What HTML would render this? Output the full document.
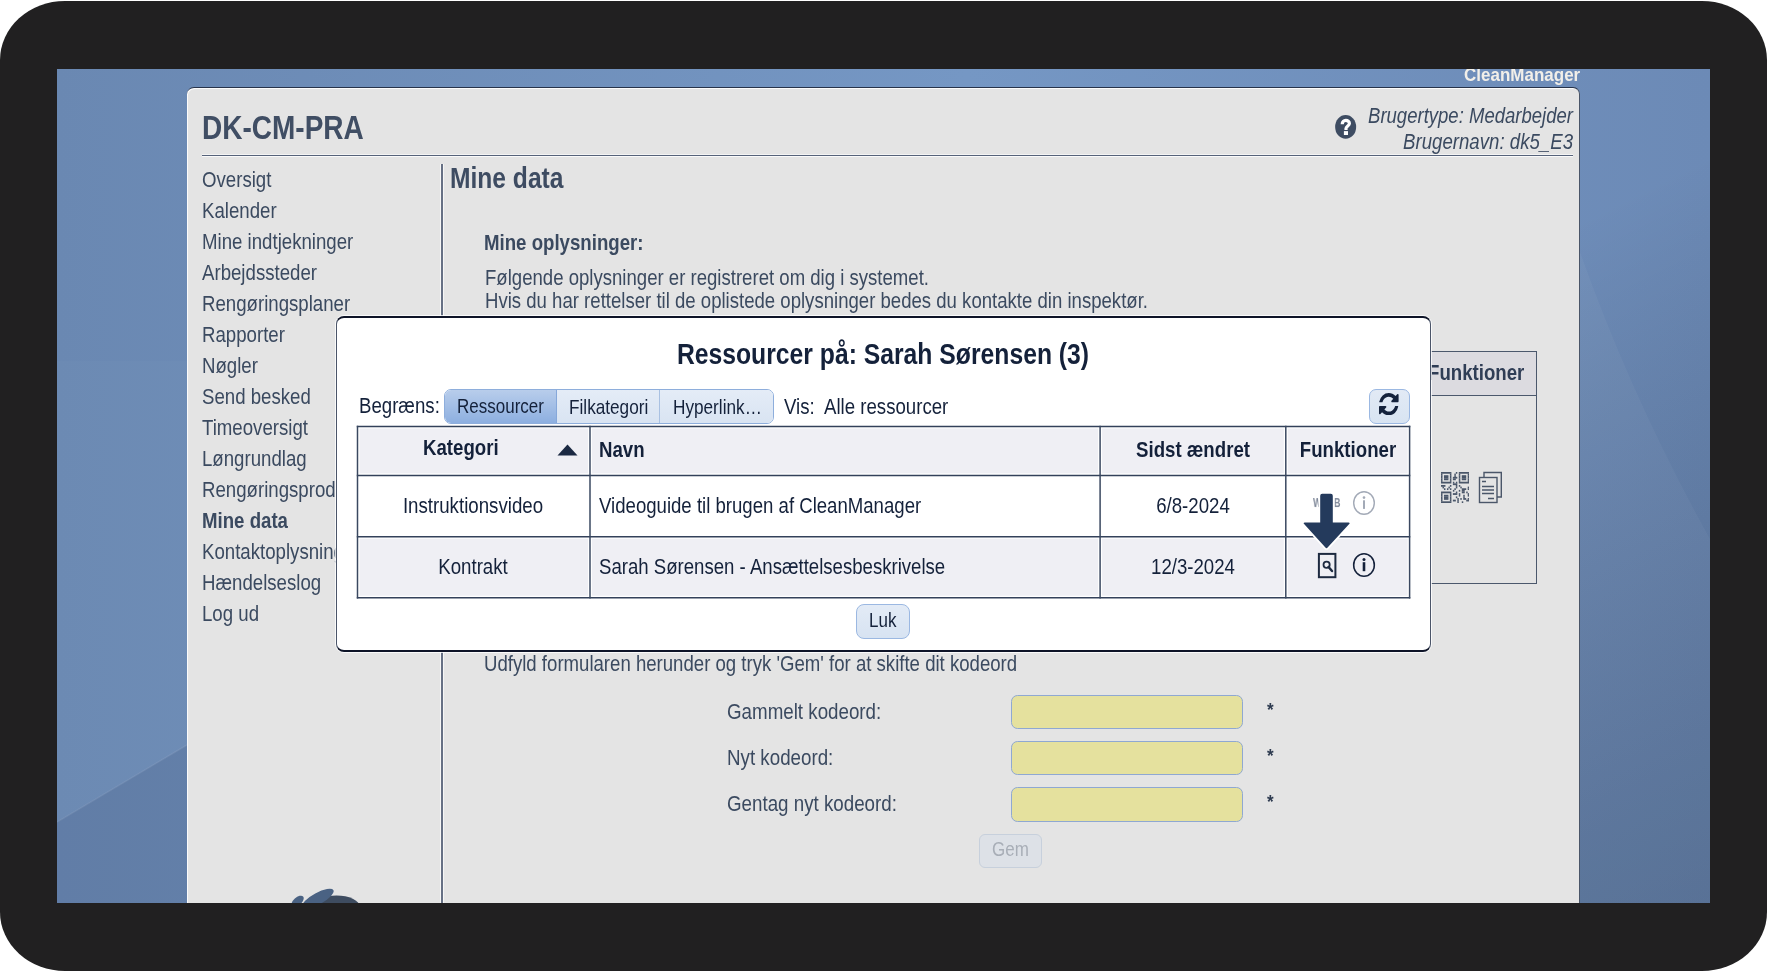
<!DOCTYPE html>
<html><head><meta charset="utf-8"><title>CleanManager</title><style>
*{margin:0;padding:0;box-sizing:border-box}
html,body{width:1767px;height:971px;overflow:hidden;background:#fff}
body{position:relative;font-family:"Liberation Sans",sans-serif}
.t{position:absolute;white-space:nowrap;will-change:transform}
.abs{position:absolute}
#frame{position:absolute;left:0;top:1px;width:1767px;height:970px;background:#212021;border-radius:65px/59px}
#screen{position:absolute;left:57px;top:69px;width:1653px;height:834px;display:block}
.streak{position:absolute}
#panel{position:absolute;left:187px;top:86.5px;width:1393px;height:816.5px;background:#e4e4e4;border-radius:7px 7px 0 0;
 border-top:1.9px solid #27334a;border-right:1.2px solid #4a5568;box-shadow:inset 1px 1px 0 #fbfbfb}
.hline{position:absolute;height:1.5px;background:#56637a;box-shadow:0 1px 0 #fafafa,0 -1px 0 #f4f4f4}
.vline{position:absolute;width:1.6px;background:#667084;box-shadow:1px 0 0 #f6f6f6,-1px 0 0 #f6f6f6}
#bgtable{position:absolute;left:480px;top:351px;width:1057px;height:233px;border:1.5px solid #4b586c;background:#e4e4e4}
.bghead{position:absolute;left:0;top:0;right:0;height:44px;background:#dcdbe0;border-bottom:1.5px solid #4b586c}
.inp{position:absolute;left:1010.8px;width:232px;height:34.3px;background:#e5e19e;border:1.2px solid #8fa8d2;border-radius:6.5px}
#gem{position:absolute;left:979px;top:834px;width:63px;height:34px;background:#dde1e7;border:1px solid #c7d0dc;border-radius:6px;color:#a8aeb7;font-size:17px;line-height:32px;text-align:center}
#modal{position:absolute;left:336px;top:315.5px;width:1095px;height:336px;background:#fff;border-radius:8px;
 border-top:2px solid #0e1428;border-bottom:2px solid #0e1428;border-left:1.3px solid #4b5569;border-right:1.3px solid #4b5569;box-shadow:0 0 0 1px rgba(255,255,255,0.8)}
#seg{position:absolute;left:444px;top:389px;height:34.5px;display:flex;border:1px solid #8eaedc;border-radius:7px;overflow:hidden}
.sg{height:100%;font-size:17px;line-height:32px;text-align:center;color:#14213a;background:linear-gradient(#e4ecf7,#d9e4f2);border-right:1px solid #a9c1e2}
.sg.last{border-right:none}
.sg.act{background:linear-gradient(#b8cdeb,#8dafe0);border-right:1px solid #86a8da}
#refresh{position:absolute;left:1368.5px;top:389px;width:41.5px;height:34.5px;border:1.5px solid #9bb8e2;border-radius:7px;background:linear-gradient(#e2eaf5,#d8e4f2)}
#tbl{position:absolute;left:357px;top:426px;width:1053px;height:173px;border:1.5px solid #313f56;border-top-width:1.4px;border-bottom-width:2px;overflow:hidden}
#tbl .row{position:absolute;left:0;right:0}
#tbl .hdr{background:#eeeef3}
#tbl .alt{background:#efeff4}
#tbl .hl{position:absolute;left:0;right:0;height:1.5px;background:#34435a}
#tbl .vl{position:absolute;top:0;bottom:0;width:1.5px;background:#34435a}
#luk{position:absolute;left:855.5px;top:604px;width:54px;height:34.5px;border:1.5px solid #9bb8e2;border-radius:8px;background:linear-gradient(#e3ebf6,#d7e3f2);color:#14213a;font-size:17px;line-height:31px;text-align:center}
</style></head>
<body>
<div id="frame"></div>
<svg id="screen" width="1653" height="834" viewBox="0 0 1653 834">
<defs>
<linearGradient id="gh" x1="0" y1="0" x2="1" y2="0"><stop offset="0" stop-color="#6a88b2"/><stop offset="0.55" stop-color="#7597c4"/><stop offset="1" stop-color="#6c8ab6"/></linearGradient>
<linearGradient id="gv" x1="0" y1="0" x2="1" y2="1"><stop offset="0" stop-color="#000" stop-opacity="0"/><stop offset="0.55" stop-color="#000" stop-opacity="0"/><stop offset="1" stop-color="#0a1830" stop-opacity="0.26"/></linearGradient>
</defs>
<rect width="1653" height="834" fill="url(#gh)"/>
<rect width="1653" height="834" fill="url(#gv)"/>
<path d="M0 292 L130 292 L130 676 L0 753 Z" fill="#fff" fill-opacity="0.02"/>
<path d="M0 753 L130 676 L130 834 L0 834 Z" fill="#0a1a38" fill-opacity="0.09"/>
<path d="M0 753 L130 676" stroke="#fff" stroke-opacity="0.08" stroke-width="1.5"/>
<path d="M1522 180 Q1575 330 1653 470 L1653 834 L1522 834 Z" fill="#fff" fill-opacity="0.035"/>
</svg>
<div style="position:absolute;left:1400px;top:69px;width:200px;height:18px;overflow:hidden">
<div class="t " style="left:64px;top:-3.09px;font-size:17px;line-height:20.4px;color:#f2efe9;transform:scaleY(1.08);transform-origin:0 16.09px;font-weight:700;">CleanManager</div>
</div>
<div id="panel"></div>
<div class="t " style="left:202px;top:112.99px;font-size:28.0px;line-height:33.6px;color:#404e64;transform:scaleY(1.19);transform-origin:0 26.51px;font-weight:700;">DK-CM-PRA</div>
<div class="hline" style="left:202px;top:154.5px;width:1371px;"></div>
<div class="t " style="left:1173.00px;width:400px;text-align:right;top:106.44px;font-size:18.55px;line-height:22.26px;color:#3b4a60;transform:scaleY(1.16);transform-origin:0 17.56px;font-style:italic;">Brugertype: Medarbejder</div>
<div class="t " style="left:1173.00px;width:400px;text-align:right;top:132.04px;font-size:18.65px;line-height:22.38px;color:#3b4a60;transform:scaleY(1.16);transform-origin:0 17.66px;font-style:italic;">Brugernavn: dk5_E3</div>
<svg class="abs" style="left:1334px;top:114px" width="24" height="26" viewBox="0 0 24 26"><ellipse cx="11.65" cy="12.9" rx="10.5" ry="11.9" fill="#3e4c62"/><path d="M8.2 10.3 C8.2 7.9 9.9 6.35 11.8 6.35 C13.8 6.35 15.4 7.7 15.4 9.5 C15.4 11.7 12.0 12.2 12.0 14.6 V15.9" fill="none" stroke="#fff" stroke-width="3.2"/><rect x="9.9" y="17.1" width="4.1" height="3.9" fill="#fff"/></svg>
<div class="t " style="left:201.7px;top:170.04px;font-size:18.65px;line-height:22.38px;color:#3b4a60;transform:scaleY(1.16);transform-origin:0 17.66px;">Oversigt</div>
<div class="t " style="left:201.7px;top:201.04px;font-size:18.65px;line-height:22.38px;color:#3b4a60;transform:scaleY(1.16);transform-origin:0 17.66px;">Kalender</div>
<div class="t " style="left:201.7px;top:232.04px;font-size:18.65px;line-height:22.38px;color:#3b4a60;transform:scaleY(1.16);transform-origin:0 17.66px;">Mine indtjekninger</div>
<div class="t " style="left:201.7px;top:263.04px;font-size:18.65px;line-height:22.38px;color:#3b4a60;transform:scaleY(1.16);transform-origin:0 17.66px;">Arbejdssteder</div>
<div class="t " style="left:201.7px;top:294.04px;font-size:18.65px;line-height:22.38px;color:#3b4a60;transform:scaleY(1.16);transform-origin:0 17.66px;">Rengøringsplaner</div>
<div class="t " style="left:201.7px;top:325.04px;font-size:18.65px;line-height:22.38px;color:#3b4a60;transform:scaleY(1.16);transform-origin:0 17.66px;">Rapporter</div>
<div class="t " style="left:201.7px;top:356.04px;font-size:18.65px;line-height:22.38px;color:#3b4a60;transform:scaleY(1.16);transform-origin:0 17.66px;">Nøgler</div>
<div class="t " style="left:201.7px;top:387.04px;font-size:18.65px;line-height:22.38px;color:#3b4a60;transform:scaleY(1.16);transform-origin:0 17.66px;">Send besked</div>
<div class="t " style="left:201.7px;top:418.04px;font-size:18.65px;line-height:22.38px;color:#3b4a60;transform:scaleY(1.16);transform-origin:0 17.66px;">Timeoversigt</div>
<div class="t " style="left:201.7px;top:449.04px;font-size:18.65px;line-height:22.38px;color:#3b4a60;transform:scaleY(1.16);transform-origin:0 17.66px;">Løngrundlag</div>
<div class="t " style="left:201.7px;top:480.04px;font-size:18.65px;line-height:22.38px;color:#3b4a60;transform:scaleY(1.16);transform-origin:0 17.66px;">Rengøringsprodukter</div>
<div class="t " style="left:201.7px;top:511.04px;font-size:18.65px;line-height:22.38px;color:#3b4a60;transform:scaleY(1.16);transform-origin:0 17.66px;font-weight:700;">Mine data</div>
<div class="t " style="left:201.7px;top:542.04px;font-size:18.65px;line-height:22.38px;color:#3b4a60;transform:scaleY(1.16);transform-origin:0 17.66px;">Kontaktoplysninger</div>
<div class="t " style="left:201.7px;top:573.04px;font-size:18.65px;line-height:22.38px;color:#3b4a60;transform:scaleY(1.16);transform-origin:0 17.66px;">Hændelseslog</div>
<div class="t " style="left:201.7px;top:604.04px;font-size:18.65px;line-height:22.38px;color:#3b4a60;transform:scaleY(1.16);transform-origin:0 17.66px;">Log ud</div>
<div class="vline" style="left:441.4px;top:163.8px;height:739.2px;"></div>
<div class="t " style="left:449.5px;top:164.61px;font-size:24.6px;line-height:29.52px;color:#3e4c62;transform:scaleY(1.18);transform-origin:0 23.29px;font-weight:700;">Mine data</div>
<div class="t " style="left:484.0px;top:232.54px;font-size:18.65px;line-height:22.38px;color:#3b4a60;transform:scaleY(1.16);transform-origin:0 17.66px;font-weight:700;">Mine oplysninger:</div>
<div class="t " style="left:484.6px;top:268.21px;font-size:18.58px;line-height:22.3px;color:#3b4a60;transform:scaleY(1.16);transform-origin:0 17.59px;">Følgende oplysninger er registreret om dig i systemet.</div>
<div class="t " style="left:484.6px;top:290.66px;font-size:18.58px;line-height:22.3px;color:#3b4a60;transform:scaleY(1.16);transform-origin:0 17.59px;">Hvis du har rettelser til de oplistede oplysninger bedes du kontakte din inspektør.</div>
<div id="bgtable"><div class="bghead"></div></div>
<div class="t " style="left:1428px;top:362.74px;font-size:18.65px;line-height:22.38px;color:#2f3d55;transform:scaleY(1.16);transform-origin:0 17.66px;font-weight:700;">Funktioner</div>
<svg class="abs" style="left:1440.8px;top:471.8px" width="28.2" height="31" viewBox="0 0 19 19" preserveAspectRatio="none"><g fill="#4a5669"><rect x="0" y="-0.04" width="7" height="1.1"/><rect x="10" y="-0.04" width="1" height="1.1"/><rect x="12" y="-0.04" width="7" height="1.1"/><rect x="0" y="0.96" width="1" height="1.1"/><rect x="6" y="0.96" width="1" height="1.1"/><rect x="9" y="0.96" width="1" height="1.1"/><rect x="12" y="0.96" width="1" height="1.1"/><rect x="18" y="0.96" width="1" height="1.1"/><rect x="0" y="1.96" width="1" height="1.1"/><rect x="2" y="1.96" width="3" height="1.1"/><rect x="6" y="1.96" width="1" height="1.1"/><rect x="9" y="1.96" width="1" height="1.1"/><rect x="12" y="1.96" width="1" height="1.1"/><rect x="14" y="1.96" width="3" height="1.1"/><rect x="18" y="1.96" width="1" height="1.1"/><rect x="0" y="2.96" width="1" height="1.1"/><rect x="2" y="2.96" width="3" height="1.1"/><rect x="6" y="2.96" width="1" height="1.1"/><rect x="8" y="2.96" width="3" height="1.1"/><rect x="12" y="2.96" width="1" height="1.1"/><rect x="14" y="2.96" width="3" height="1.1"/><rect x="18" y="2.96" width="1" height="1.1"/><rect x="0" y="3.96" width="1" height="1.1"/><rect x="2" y="3.96" width="3" height="1.1"/><rect x="6" y="3.96" width="1" height="1.1"/><rect x="8" y="3.96" width="2" height="1.1"/><rect x="12" y="3.96" width="1" height="1.1"/><rect x="14" y="3.96" width="3" height="1.1"/><rect x="18" y="3.96" width="1" height="1.1"/><rect x="0" y="4.96" width="1" height="1.1"/><rect x="6" y="4.96" width="1" height="1.1"/><rect x="12" y="4.96" width="1" height="1.1"/><rect x="18" y="4.96" width="1" height="1.1"/><rect x="0" y="5.96" width="7" height="1.1"/><rect x="8" y="5.96" width="1" height="1.1"/><rect x="10" y="5.96" width="1" height="1.1"/><rect x="12" y="5.96" width="7" height="1.1"/><rect x="8" y="6.96" width="3" height="1.1"/><rect x="0" y="7.96" width="3" height="1.1"/><rect x="6" y="7.96" width="1" height="1.1"/><rect x="10" y="7.96" width="1" height="1.1"/><rect x="12" y="7.96" width="1" height="1.1"/><rect x="1" y="8.96" width="1" height="1.1"/><rect x="5" y="8.96" width="1" height="1.1"/><rect x="10" y="8.96" width="1" height="1.1"/><rect x="13" y="8.96" width="1" height="1.1"/><rect x="18" y="8.96" width="1" height="1.1"/><rect x="2" y="9.96" width="1" height="1.1"/><rect x="4" y="9.96" width="1" height="1.1"/><rect x="6" y="9.96" width="1" height="1.1"/><rect x="9" y="9.96" width="1" height="1.1"/><rect x="14" y="9.96" width="3" height="1.1"/><rect x="18" y="9.96" width="1" height="1.1"/><rect x="8" y="10.96" width="1" height="1.1"/><rect x="12" y="10.96" width="1" height="1.1"/><rect x="14" y="10.96" width="2" height="1.1"/><rect x="0" y="11.96" width="7" height="1.1"/><rect x="10" y="11.96" width="1" height="1.1"/><rect x="14" y="11.96" width="2" height="1.1"/><rect x="17" y="11.96" width="1" height="1.1"/><rect x="0" y="12.96" width="1" height="1.1"/><rect x="6" y="12.96" width="1" height="1.1"/><rect x="8" y="12.96" width="3" height="1.1"/><rect x="12" y="12.96" width="1" height="1.1"/><rect x="18" y="12.96" width="1" height="1.1"/><rect x="0" y="13.96" width="1" height="1.1"/><rect x="2" y="13.96" width="3" height="1.1"/><rect x="6" y="13.96" width="1" height="1.1"/><rect x="12" y="13.96" width="1" height="1.1"/><rect x="15" y="13.96" width="1" height="1.1"/><rect x="18" y="13.96" width="1" height="1.1"/><rect x="0" y="14.96" width="1" height="1.1"/><rect x="2" y="14.96" width="3" height="1.1"/><rect x="6" y="14.96" width="1" height="1.1"/><rect x="10" y="14.96" width="1" height="1.1"/><rect x="15" y="14.96" width="1" height="1.1"/><rect x="0" y="15.96" width="1" height="1.1"/><rect x="2" y="15.96" width="3" height="1.1"/><rect x="6" y="15.96" width="1" height="1.1"/><rect x="11" y="15.96" width="1" height="1.1"/><rect x="13" y="15.96" width="1" height="1.1"/><rect x="15" y="15.96" width="2" height="1.1"/><rect x="18" y="15.96" width="1" height="1.1"/><rect x="0" y="16.96" width="1" height="1.1"/><rect x="6" y="16.96" width="1" height="1.1"/><rect x="8" y="16.96" width="2" height="1.1"/><rect x="11" y="16.96" width="1" height="1.1"/><rect x="17" y="16.96" width="2" height="1.1"/><rect x="0" y="17.96" width="7" height="1.1"/><rect x="11" y="17.96" width="1" height="1.1"/><rect x="14" y="17.96" width="1" height="1.1"/></g></svg>
<svg class="abs" style="left:1478px;top:471px" width="25" height="33" viewBox="0 0 25 33"><g fill="none" stroke="#4a5669" stroke-width="1.4"><path d="M6 6 V1.5 H23.3 V26 H19"/><rect x="1.5" y="6.5" width="17.5" height="25" /></g><g stroke="#4a5669" stroke-width="1.4"><path d="M4 10.5 H8 M4 15.5 H16 M4 19 H16 M4 22.5 H16 M10 27.5 H16"/></g></svg>
<div class="t " style="left:483.8px;top:653.54px;font-size:18.6px;line-height:22.32px;color:#3b4a60;transform:scaleY(1.16);transform-origin:0 17.61px;">Udfyld formularen herunder og tryk 'Gem' for at skifte dit kodeord</div>
<div class="t " style="left:726.95px;top:702.05px;font-size:18.75px;line-height:22.5px;color:#3b4a60;transform:scaleY(1.16);transform-origin:0 17.75px;">Gammelt kodeord:</div>
<div class="inp" style="top:695.0px"></div>
<div class="t " style="left:1267.3px;top:701.93px;font-size:15.5px;line-height:18.6px;color:#2e3b50;transform:scaleY(1.16);transform-origin:0 14.67px;font-weight:700;transform:scale(1.1,1.22);">*</div>
<div class="t " style="left:726.95px;top:748.15px;font-size:18.75px;line-height:22.5px;color:#3b4a60;transform:scaleY(1.16);transform-origin:0 17.75px;">Nyt kodeord:</div>
<div class="inp" style="top:741.2px"></div>
<div class="t " style="left:1267.3px;top:748.03px;font-size:15.5px;line-height:18.6px;color:#2e3b50;transform:scaleY(1.16);transform-origin:0 14.67px;font-weight:700;transform:scale(1.1,1.22);">*</div>
<div class="t " style="left:726.95px;top:794.25px;font-size:18.75px;line-height:22.5px;color:#3b4a60;transform:scaleY(1.16);transform-origin:0 17.75px;">Gentag nyt kodeord:</div>
<div class="inp" style="top:787.4px"></div>
<div class="t " style="left:1267.3px;top:794.13px;font-size:15.5px;line-height:18.6px;color:#2e3b50;transform:scaleY(1.16);transform-origin:0 14.67px;font-weight:700;transform:scale(1.1,1.22);">*</div>
<div id="gem"></div>
<div class="t " style="left:991.5px;top:840.91px;font-size:17px;line-height:20.4px;color:#a8aeb7;transform:scaleY(1.16);transform-origin:0 16.09px;">Gem</div>
<svg class="abs" style="left:285px;top:885px" width="80" height="18" viewBox="0 0 80 18"><ellipse cx="51.5" cy="21.5" rx="23" ry="11" fill="#3e4c60"/><ellipse cx="33" cy="13.5" rx="17.5" ry="5.8" fill="#4a6283" transform="rotate(-28 33 13.5)"/><ellipse cx="12.5" cy="16.5" rx="7.5" ry="4" fill="#4a6283" transform="rotate(-42 12.5 16.5)"/></svg>
<div id="modal">
</div>
<div class="t " style="left:583.20px;width:600px;text-align:center;top:341.24px;font-size:24.72px;line-height:29.66px;color:#14213a;transform:scaleY(1.18);transform-origin:0 23.40px;font-weight:700;">Ressourcer på: Sarah Sørensen (3)</div>
<div class="t " style="left:358.55px;top:396.24px;font-size:18.65px;line-height:22.38px;color:#14213a;transform:scaleY(1.16);transform-origin:0 17.66px;">Begræns:</div>
<div id="seg"><div class="sg act" style="width:111.5px"></div><div class="sg" style="width:103px"></div><div class="sg last" style="width:113px"></div></div>
<div class="t " style="left:456.7px;top:397.81px;font-size:17px;line-height:20.4px;color:#14213a;transform:scaleY(1.16);transform-origin:0 16.09px;">Ressourcer</div>
<div class="t " style="left:569.4px;top:397.62px;font-size:17.2px;line-height:20.64px;color:#14213a;transform:scaleY(1.16);transform-origin:0 16.28px;">Filkategori</div>
<div class="t " style="left:672.5px;top:397.62px;font-size:17.2px;line-height:20.64px;color:#14213a;transform:scaleY(1.16);transform-origin:0 16.28px;">Hyperlink…</div>
<div class="t " style="left:784px;top:397.11px;font-size:18.65px;line-height:22.38px;color:#14213a;transform:scaleY(1.16);transform-origin:0 17.66px;">Vis:</div>
<div class="t " style="left:824px;top:397.11px;font-size:18.65px;line-height:22.38px;color:#14213a;transform:scaleY(1.16);transform-origin:0 17.66px;">Alle ressourcer</div>
<div id="refresh"><svg width="19.6" height="22.3" viewBox="0 0 1536 1536" preserveAspectRatio="none" style="position:absolute;left:9.6px;top:2.5px"><path fill="#14223c" d="M1511 928q0 5-1 7-64 268-268 434.5T764 1536q-146 0-282.5-55T238 1324l-129 129q-19 19-45 19t-45-19-19-45V960q0-26 19-45t45-19h448q26 0 45 19t19 45-19 45l-137 137q71 66 161 102t187 36q134 0 250-65t186-179q11-17 53-117 8-23 30-23h192q13 0 22.5 9.5t9.5 22.5zm25-800v448q0 26-19 45t-45 19h-448q-26 0-45-19t-19-45 19-45l138-138Q969 256 768 256q-134 0-250 65T332 500q-11 17-53 117-8 23-30 23H50q-13 0-22.5-9.5T18 608v-7q65-268 270-434.5T768 0q146 0 284 55.5T1297 212l130-129q19-19 45-19t45 19 19 45z"/></svg></div>
<svg class="abs" style="left:350px;top:420px" width="1070" height="190" viewBox="0 0 1070 190"><rect x="7.5" y="6.449999999999989" width="1052.1" height="171.29000000000002" fill="#fff"/><rect x="9.50" y="8.45" width="228.50" height="44.95" fill="#efeff4"/><rect x="242.00" y="8.45" width="506.10" height="44.95" fill="#efeff4"/><rect x="752.10" y="8.45" width="181.70" height="44.95" fill="#efeff4"/><rect x="937.80" y="8.45" width="119.80" height="44.95" fill="#efeff4"/><rect x="9.50" y="118.70" width="228.50" height="57.04" fill="#efeff4"/><rect x="242.00" y="118.70" width="506.10" height="57.04" fill="#efeff4"/><rect x="752.10" y="118.70" width="181.70" height="57.04" fill="#efeff4"/><rect x="937.80" y="118.70" width="119.80" height="57.04" fill="#efeff4"/><line x1="6.8" y1="6.449999999999989" x2="1060.3" y2="6.449999999999989" stroke="#33415a" stroke-width="1.5"/><line x1="6.8" y1="55.39999999999998" x2="1060.3" y2="55.39999999999998" stroke="#33415a" stroke-width="1.5"/><line x1="6.8" y1="116.70000000000005" x2="1060.3" y2="116.70000000000005" stroke="#33415a" stroke-width="1.5"/><line x1="6.8" y1="177.74" x2="1060.3" y2="177.74" stroke="#33415a" stroke-width="1.7"/><line x1="7.5" y1="5.7499999999999885" x2="7.5" y2="178.54000000000002" stroke="#3a4860" stroke-width="1.5"/><line x1="240.0" y1="5.7499999999999885" x2="240.0" y2="178.54000000000002" stroke="#3a4860" stroke-width="1.5"/><line x1="750.0999999999999" y1="5.7499999999999885" x2="750.0999999999999" y2="178.54000000000002" stroke="#3a4860" stroke-width="1.5"/><line x1="935.8" y1="5.7499999999999885" x2="935.8" y2="178.54000000000002" stroke="#3a4860" stroke-width="1.5"/><line x1="1059.6" y1="5.7499999999999885" x2="1059.6" y2="178.54000000000002" stroke="#3a4860" stroke-width="1.5"/></svg>
<svg class="abs" style="left:557px;top:444px" width="21" height="12" viewBox="0 0 21 12"><path d="M10.5 0.5 L20.5 11.5 H0.5 Z" fill="#1b2942"/></svg>
<div class="t " style="left:423.2px;top:437.64px;font-size:18.65px;line-height:22.38px;color:#14213a;transform:scaleY(1.16);transform-origin:0 17.66px;font-weight:700;">Kategori</div>
<div class="t " style="left:598.7px;top:439.64px;font-size:18.65px;line-height:22.38px;color:#14213a;transform:scaleY(1.16);transform-origin:0 17.66px;font-weight:700;">Navn</div>
<div class="t " style="left:1103.00px;width:180px;text-align:center;top:439.64px;font-size:18.65px;line-height:22.38px;color:#14213a;transform:scaleY(1.16);transform-origin:0 17.66px;font-weight:700;">Sidst ændret</div>
<div class="t " style="left:1287.70px;width:120px;text-align:center;top:439.64px;font-size:18.65px;line-height:22.38px;color:#14213a;transform:scaleY(1.16);transform-origin:0 17.66px;font-weight:700;">Funktioner</div>
<div class="t " style="left:363.00px;width:220px;text-align:center;top:496.00px;font-size:18.7px;line-height:22.44px;color:#14213a;transform:scaleY(1.16);transform-origin:0 17.70px;">Instruktionsvideo</div>
<div class="t " style="left:362.80px;width:220px;text-align:center;top:557.20px;font-size:18.7px;line-height:22.44px;color:#14213a;transform:scaleY(1.16);transform-origin:0 17.70px;">Kontrakt</div>
<div class="t " style="left:599px;top:496.09px;font-size:18.6px;line-height:22.32px;color:#14213a;transform:scaleY(1.16);transform-origin:0 17.61px;">Videoguide til brugen af CleanManager</div>
<div class="t " style="left:599px;top:557.29px;font-size:18.6px;line-height:22.32px;color:#14213a;transform:scaleY(1.16);transform-origin:0 17.61px;">Sarah Sørensen - Ansættelsesbeskrivelse</div>
<div class="t " style="left:1102.60px;width:180px;text-align:center;top:496.04px;font-size:18.65px;line-height:22.38px;color:#14213a;transform:scaleY(1.16);transform-origin:0 17.66px;">6/8-2024</div>
<div class="t " style="left:1103.10px;width:180px;text-align:center;top:557.24px;font-size:18.65px;line-height:22.38px;color:#14213a;transform:scaleY(1.16);transform-origin:0 17.66px;">12/3-2024</div>
<div class="t " style="left:1312.5px;top:496.66px;font-size:10.5px;line-height:12.6px;color:#7f8899;transform:scaleY(1.16);transform-origin:0 9.94px;font-weight:700;transform:scale(0.85,1.3);">W</div>
<div class="t " style="left:1333.8px;top:496.66px;font-size:10.5px;line-height:12.6px;color:#7f8899;transform:scaleY(1.16);transform-origin:0 9.94px;font-weight:700;transform:scale(0.85,1.3);">B</div>
<svg class="abs" style="left:1352px;top:490px" width="24" height="26" viewBox="0 0 24 26"><ellipse cx="12" cy="13" rx="10.3" ry="11.3" fill="none" stroke="#a3aab7" stroke-width="1.4"/><circle cx="12" cy="7.6" r="1.3" fill="#a3aab7"/><rect x="11" y="10.3" width="2" height="8.6" fill="#a3aab7"/></svg>
<svg class="abs" style="left:1352px;top:551.5px" width="24" height="26" viewBox="0 0 24 26"><ellipse cx="12" cy="13" rx="10.3" ry="11.3" fill="none" stroke="#14213a" stroke-width="1.6"/><circle cx="12" cy="7.4" r="1.5" fill="#14213a"/><rect x="10.7" y="10.2" width="2.6" height="9" fill="#14213a"/></svg>
<svg class="abs" style="left:1317px;top:551.5px" width="21" height="27" viewBox="0 0 21 27"><rect x="1.9" y="1.9" width="16.5" height="23.3" fill="none" stroke="#1d2a40" stroke-width="2"/><circle cx="9.6" cy="12.8" r="3.1" fill="none" stroke="#1d2a40" stroke-width="1.8"/><path d="M11.6 15 L15 19" stroke="#1d2a40" stroke-width="2.4" stroke-linecap="round"/></svg>
<svg class="abs" style="left:1296px;top:488px" width="62" height="64" viewBox="0 0 62 64"><path d="M26.2 5.8 H34.8 Q36.8 5.8 36.8 7.8 V34.6 H52.6 Q54.6 34.6 53.2 36.1 L31.6 59.6 Q30.5 60.9 29.4 59.6 L8.1 36.1 Q6.7 34.6 8.7 34.6 H24.2 V7.8 Q24.2 5.8 26.2 5.8 Z" fill="#fff" stroke="#fff" stroke-width="3.4" stroke-linejoin="round"/><path d="M26.2 5.8 H34.8 Q36.8 5.8 36.8 7.8 V34.6 H52.6 Q54.6 34.6 53.2 36.1 L31.6 59.6 Q30.5 60.9 29.4 59.6 L8.1 36.1 Q6.7 34.6 8.7 34.6 H24.2 V7.8 Q24.2 5.8 26.2 5.8 Z" fill="#243a5c"/></svg>
<div id="luk"></div>
<div class="t " style="left:869px;top:611.81px;font-size:17px;line-height:20.4px;color:#14213a;transform:scaleY(1.16);transform-origin:0 16.09px;">Luk</div>
</body></html>
